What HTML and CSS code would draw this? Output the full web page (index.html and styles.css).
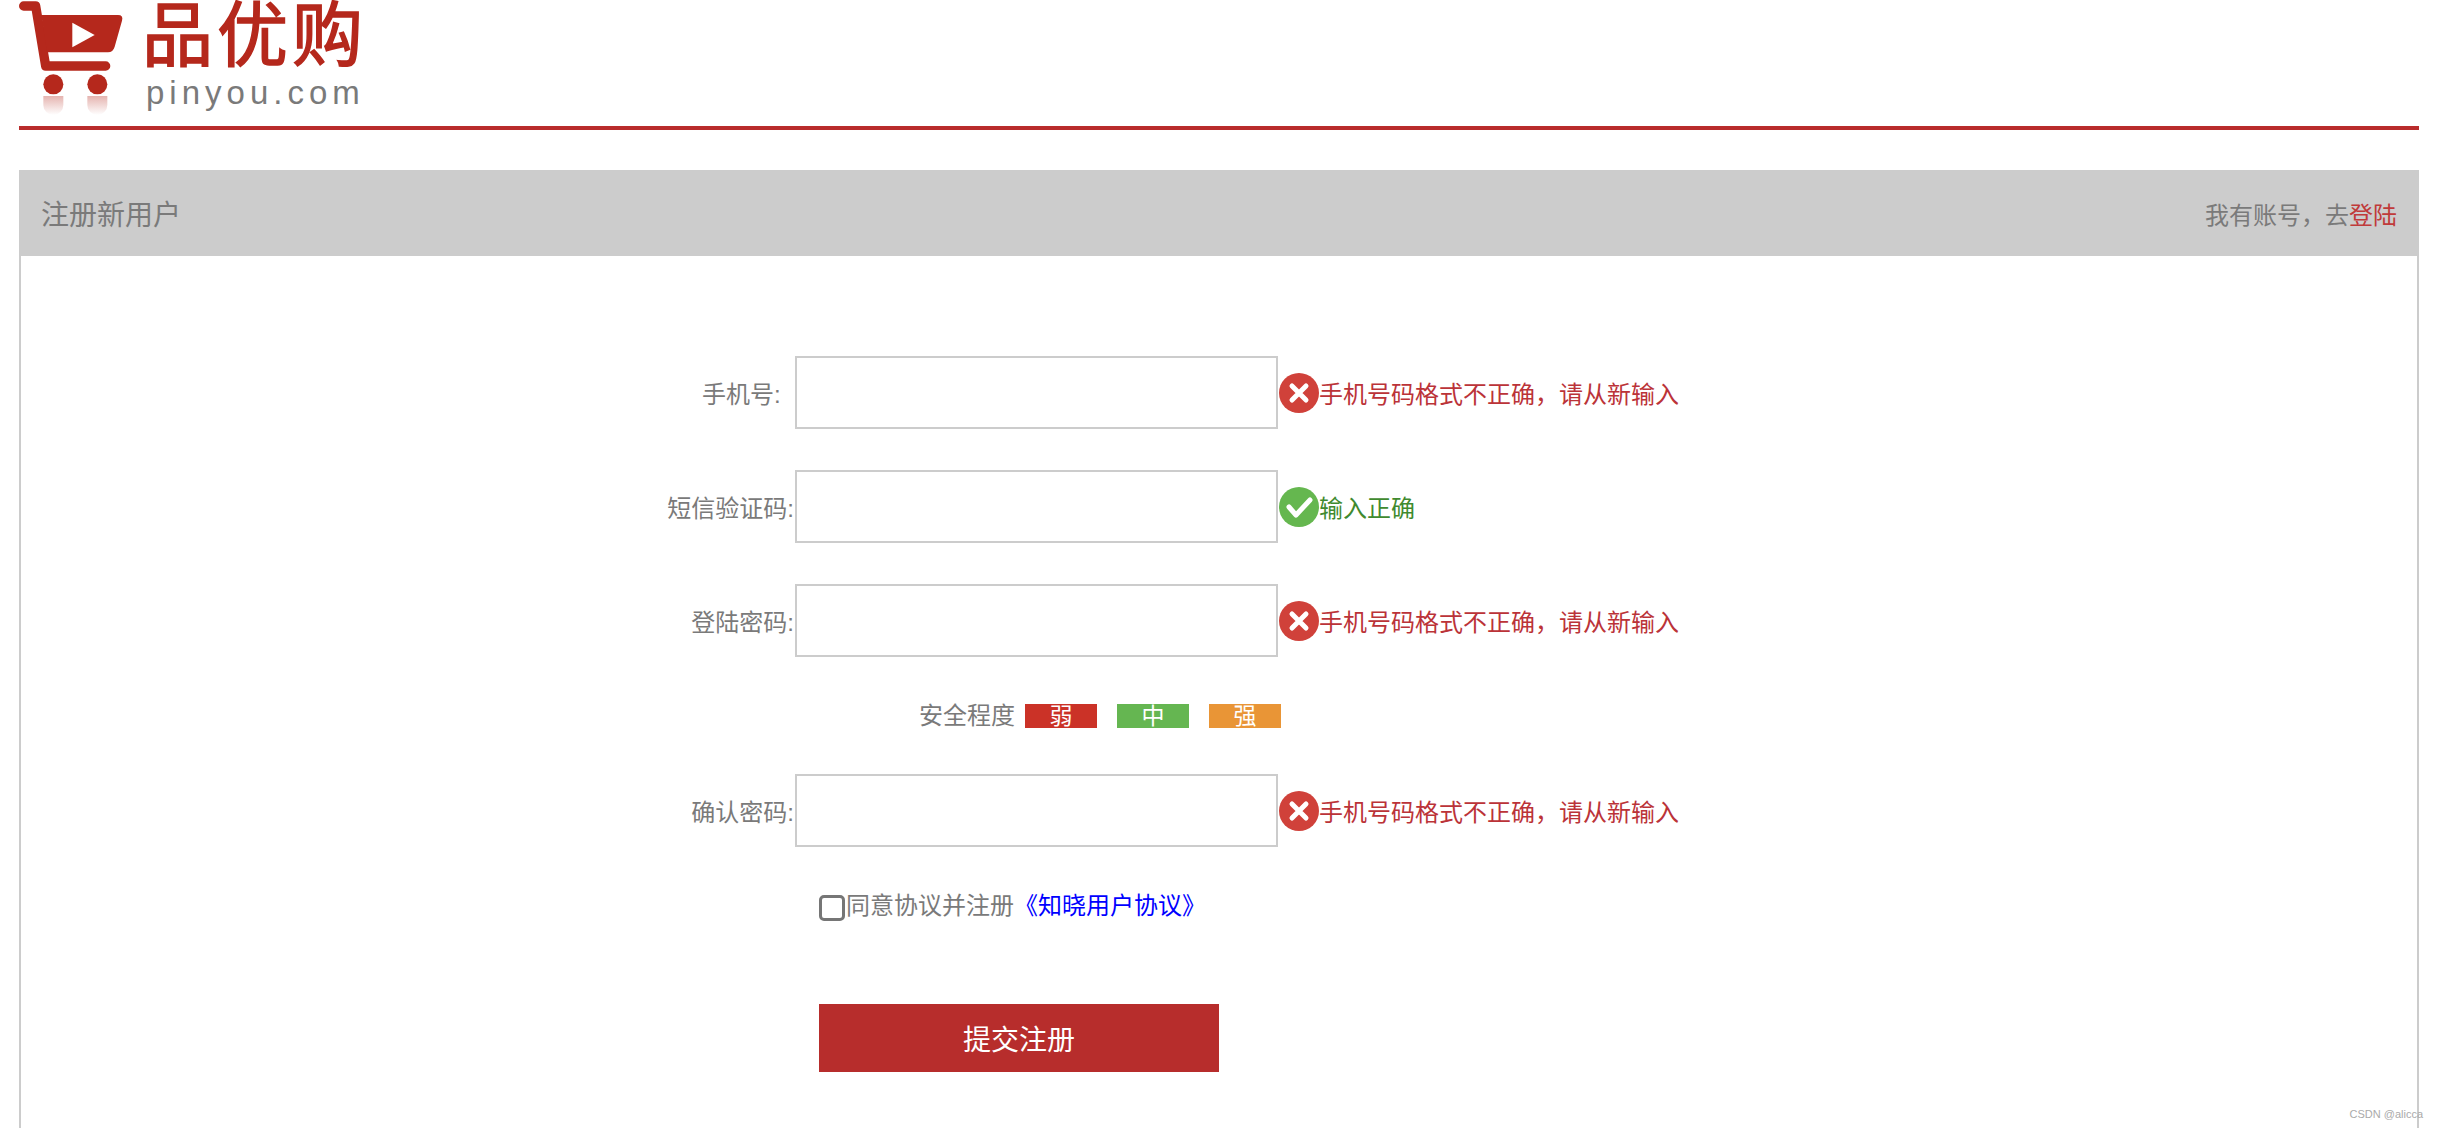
FILE: index.html
```html
<!DOCTYPE html>
<html lang="zh-CN">
<head>
    <meta charset="UTF-8">
    <meta name="viewport" content="width=device-width, initial-scale=1.0">
    <title>注册新用户</title>
    <link rel="stylesheet" href="styles.css">
</head>
<body>
    <div class="w">
        <header class="header">
            <svg class="cart" viewBox="28 0 330 360" width="110" height="120">
                <defs>
                    <linearGradient id="fade" x1="0" y1="0" x2="0" y2="1">
                        <stop offset="0" stop-color="#b5281c" stop-opacity="0.35"/>
                        <stop offset="1" stop-color="#b5281c" stop-opacity="0"/>
                    </linearGradient>
                </defs>
                <path d="M42 18H78L108 198H288" fill="none" stroke="#b5281c" stroke-width="28" stroke-linecap="round" stroke-linejoin="round"/>
                <path d="M95 45H325Q342 45 337 62L315 140Q310 157 295 157H112Z" fill="#b5281c"/>
                <path d="M188 68L255 105L188 142Z" fill="#fff"/>
                <circle cx="131" cy="253" r="30" fill="#b5281c"/>
                <circle cx="263" cy="253" r="30" fill="#b5281c"/>
                <path d="M101 288H161V315A30 30 0 0 1 101 315Z" fill="url(#fade)"/>
                <path d="M233 288H293V315A30 30 0 0 1 233 315Z" fill="url(#fade)"/>
            </svg>
            <div class="brand">
                <div class="brand-name">品优购</div>
                <div class="brand-url">pinyou.com</div>
            </div>
        </header>

        <div class="register">
            <div class="title-bar">
                <span class="title">注册新用户</span>
                <span>我有账号，去<a href="#" class="login">登陆</a></span>
            </div>

            <form class="form">
                <div class="row">
                    <label class="row-label">手机号:&nbsp;&nbsp;</label>
                    <input type="text" class="row-input">
                    <svg class="tip-icon" viewBox="0 0 40 40"><circle cx="20" cy="20" r="20" fill="#d0413a"/><path d="M13 13L27 27M27 13L13 27" stroke="#fff" stroke-width="5" stroke-linecap="round"/></svg>
                    <span class="tip error">手机号码格式不正确，请从新输入</span>
                </div>
                <div class="row">
                    <label class="row-label">短信验证码:</label>
                    <input type="text" class="row-input">
                    <svg class="tip-icon" viewBox="0 0 40 40"><circle cx="20" cy="20" r="20" fill="#65b74f"/><path d="M10 20L17 28L31 13" fill="none" stroke="#fff" stroke-width="5" stroke-linecap="round" stroke-linejoin="round"/></svg>
                    <span class="tip success">输入正确</span>
                </div>
                <div class="row">
                    <label class="row-label">登陆密码:</label>
                    <input type="password" class="row-input">
                    <svg class="tip-icon" viewBox="0 0 40 40"><circle cx="20" cy="20" r="20" fill="#d0413a"/><path d="M13 13L27 27M27 13L13 27" stroke="#fff" stroke-width="5" stroke-linecap="round"/></svg>
                    <span class="tip error">手机号码格式不正确，请从新输入</span>
                </div>
                <div class="safe">
                    <span class="safe-label">安全程度</span>
                    <span class="level weak">弱</span>
                    <span class="level middle">中</span>
                    <span class="level strong">强</span>
                </div>
                <div class="row">
                    <label class="row-label">确认密码:</label>
                    <input type="password" class="row-input">
                    <svg class="tip-icon" viewBox="0 0 40 40"><circle cx="20" cy="20" r="20" fill="#d0413a"/><path d="M13 13L27 27M27 13L13 27" stroke="#fff" stroke-width="5" stroke-linecap="round"/></svg>
                    <span class="tip error">手机号码格式不正确，请从新输入</span>
                </div>
                <div class="agree">
                    <input type="checkbox" class="agree-check">
                    <span>同意协议并注册</span><a href="#" class="agree-link">《知晓用户协议》</a>
                </div>
                <button type="button" class="submit">提交注册</button>
            </form>
        </div>
    </div>
    <div class="watermark">CSDN @alicca</div>
</body>
</html>
```
FILE: styles.css
```css
* {
    box-sizing: border-box;
}

html, body {
    height: 100vh;
    overflow: hidden;
}

body {
    margin: 0;
    font-family: "Liberation Sans", "Noto Sans CJK SC", sans-serif;
    font-size: 24px;
    color: #7a7a7a;
    background-color: #fff;
}

a {
    text-decoration: none;
}

.w {
    width: 2400px;
    margin: 0 auto;
}

.header {
    display: flex;
    height: 130px;
    margin-bottom: 40px;
    border-bottom: 4px solid #b92c2c;
}

.cart {
    flex: none;
}

.brand {
    margin-left: 13px;
}

.brand-name {
    height: 75px;
    padding-top: 1px;
    font-size: 71px;
    line-height: 70px;
    letter-spacing: 4px;
    color: #b5281c;
    -webkit-text-stroke: 1.5px #b5281c;
}

.brand-url {
    margin-left: 4px;
    font-size: 33px;
    line-height: 36px;
    letter-spacing: 5px;
    color: #7a7a7a;
}

.register {
    border: 2px solid #ccc;
    border-top: 0;
    padding-bottom: 70px;
}

.title-bar {
    display: flex;
    justify-content: space-between;
    align-items: center;
    height: 86px;
    margin: 0 -2px;
    padding: 0 22px;
    background-color: #ccc;
}

.title {
    font-size: 28px;
}

.login {
    color: #c03a3a;
}

.form {
    padding-top: 100px;
}

.row {
    display: flex;
    align-items: center;
    height: 73px;
    margin-bottom: 41px;
}

.row-label {
    width: 773px;
    text-align: right;
    margin-right: 1px;
}

.row-input {
    width: 483px;
    height: 73px;
    margin: 0 1px 0 0;
    border: 2px solid #ccc;
    background-color: #fff;
    outline: none;
}

.tip-icon {
    flex: none;
    width: 40px;
    height: 40px;
}

.error {
    color: #bb3338;
}

.success {
    color: #3f8a2f;
}

.safe {
    display: flex;
    height: 24px;
    margin: 47px 0 46px 898px;
}

.safe-label {
    margin-right: 10px;
    line-height: 23px;
}

.level {
    width: 72px;
    height: 24px;
    margin-right: 20px;
    font-size: 23px;
    line-height: 24px;
    text-align: center;
    color: #fff;
}

.weak {
    background-color: #cb3227;
}

.middle {
    background-color: #65b651;
}

.strong {
    background-color: #e99536;
}

.agree {
    display: flex;
    height: 26px;
    margin: 48px 0 83px 798px;
    line-height: 21px;
}

.agree-check {
    appearance: none;
    width: 26px;
    height: 26px;
    margin: 0 1px 0 0;
    border: 3px solid #767676;
    border-radius: 5px;
    background-color: #fff;
}

.agree-link {
    color: #00f;
}

.submit {
    display: block;
    width: 400px;
    height: 68px;
    margin-left: 798px;
    border: none;
    background-color: #b72d2c;
    color: #fff;
    font-family: inherit;
    font-size: 28px;
}

.watermark {
    position: absolute;
    right: 15px;
    bottom: 7px;
    font-size: 11px;
    line-height: 14px;
    color: #aaa;
}
```
